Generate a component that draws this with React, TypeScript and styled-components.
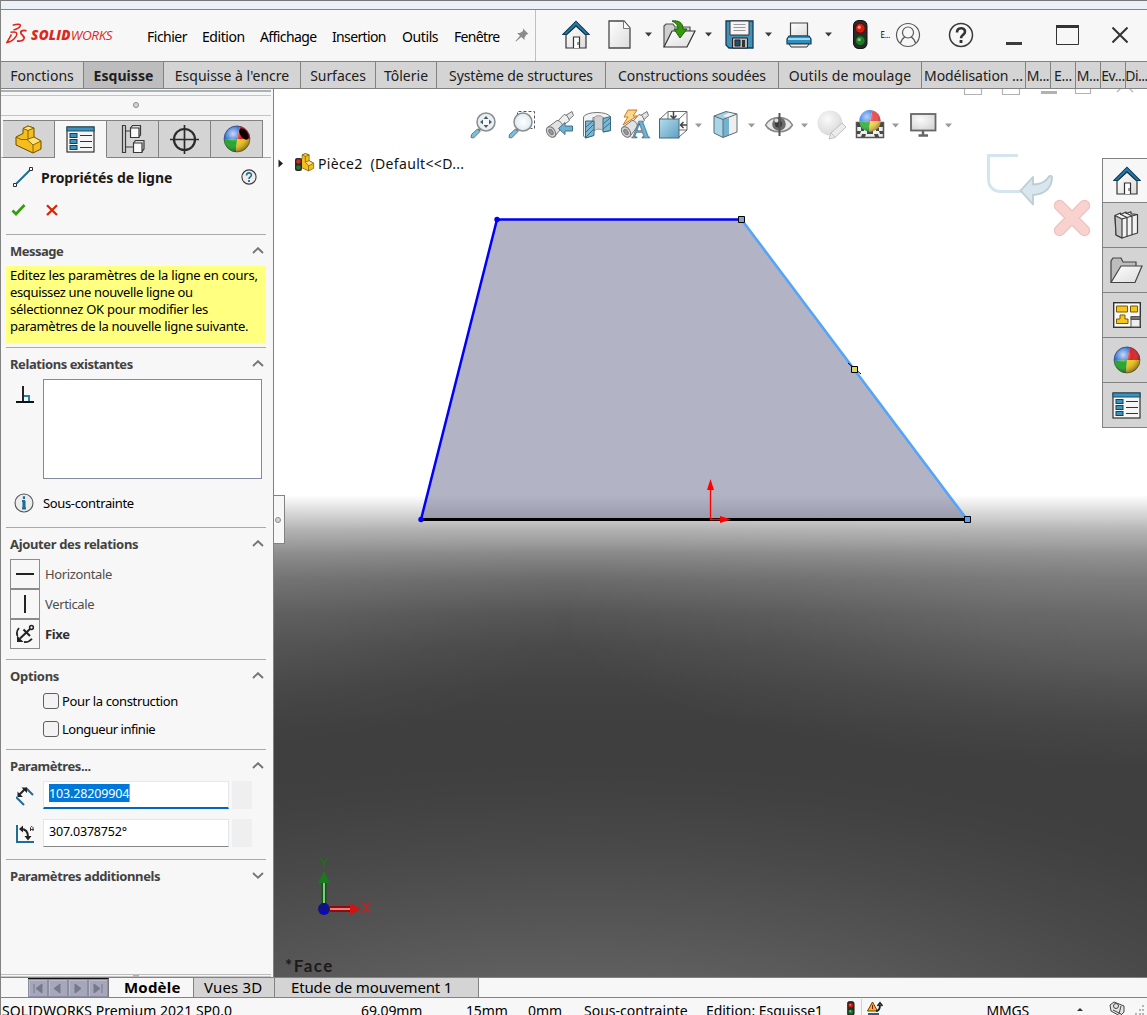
import React from "react";
import styled, { createGlobalStyle, css } from "styled-components";

const UI = '"Noto Sans", "Open Sans", sans-serif';
const LINE = "#828282";
const PANEL = "#f7f7f7";
const TAB = "#d4d4d4";

const Global = createGlobalStyle`
  *, *::before, *::after { box-sizing: border-box; }
  html, body { margin: 0; padding: 0; overflow: hidden; background: ${PANEL}; }
  svg { display: block; flex: none; }
`;

const Window = styled.div`
  width: 1147px;
  height: 1015px;
  display: flex;
  flex-direction: column;
  overflow: hidden;
  background: ${PANEL};
  border-left: 1px solid ${LINE};
  font-family: ${UI};
  font-size: 13px;
  color: #000;
  white-space: nowrap;
`;

const TitleStrip = styled.div`
  height: 10px;
  flex: none;
  background: #ecf1f9;
  border-top: 1px solid #77777b;
  border-bottom: 1px solid #84848a;
`;

/* ---------- menu bar ---------- */

const MenuBar = styled.header`
  height: 51px;
  flex: none;
  display: flex;
  align-items: center;
`;

const Brand = styled.div`
  width: 146px;
  padding-left: 5px;
  padding-bottom: 4px;
  display: flex;
  align-items: center;
`;

const BrandName = styled.span<{ $w: number; $ls: number; $ml?: number }>`
  font: italic ${(p) => p.$w} 13.5px/16px "Open Sans", sans-serif;
  letter-spacing: ${(p) => p.$ls}px;
  margin-left: ${(p) => p.$ml ?? 0}px;
  padding-top: 3px;
  color: #da291c;
`;

const MenuItem = styled.span<{ $w: number; $ls?: number }>`
  width: ${(p) => p.$w}px;
  flex: none;
  padding-top: 3px;
  font-size: 14px;
  line-height: 20px;
  letter-spacing: ${(p) => p.$ls ?? -0.3}px;
`;

const QuickBar = styled.div`
  height: 51px;
  flex: 1;
  display: flex;
  align-items: center;
  margin-left: 6px;
  padding-bottom: 2px;
  border-left: 1px solid #bfbfbf;
`;

const Slot = styled.span<{ $ml: number }>`
  margin-left: ${(p) => p.$ml}px;
  flex: none;
`;

const Tiny = styled.span`
  width: 9px;
  font-size: 8px;
  line-height: 12px;
  letter-spacing: -0.3px;
  margin-left: 13px;
  flex: none;
`;

/* ---------- command tabs ---------- */

const CommandTabs = styled.nav`
  height: 28px;
  flex: none;
  display: flex;
  border-top: 1px solid ${LINE};
  border-bottom: 1px solid ${LINE};
`;

const CommandTab = styled.div<{ $w: number; $active?: boolean; $ls: number }>`
  width: ${(p) => p.$w}px;
  flex: none;
  display: flex;
  justify-content: center;
  align-items: center;
  overflow: hidden;
  background: ${(p) => (p.$active ? "#bdbdbd" : TAB)};
  border-right: 1px solid ${LINE};
  color: #202020;
  font-size: 14px;
  letter-spacing: ${(p) => p.$ls}px;
  font-weight: ${(p) => (p.$active ? 700 : 400)};
`;

/* ---------- body ---------- */

const Body = styled.div`
  height: 888px;
  flex: none;
  display: flex;
`;

const Side = styled.aside`
  width: 273px;
  flex: none;
  display: flex;
  flex-direction: column;
  border-right: 1px solid ${LINE};
`;

const Grip = styled.div`
  height: 27px;
  width: 270px;
  flex: none;
  display: flex;
  flex-direction: column;
  align-items: center;
  border-bottom: 1px solid #c3c3c3;
  &::before {
    content: "";
    width: 270px;
    height: 6px;
    margin-top: 1px;
    margin-bottom: 6px;
    flex: none;
    border-top: 2px solid #a9b3b5;
    border-bottom: 1px solid #c4c4c4;
  }
`;

const Dot = styled.span`
  width: 6px;
  height: 6px;
  border-radius: 50%;
  background: #d4d4d4;
  border: 1px solid #8d8d8d;
`;

const ManagerTabs = styled.div`
  display: flex;
  height: 42px;
  width: 270px;
  flex: none;
  padding: 4px 0 0 2px;
  border-bottom: 1px solid #a8a8a8;
`;

const ManagerTab = styled.div<{ $active?: boolean }>`
  width: 52px;
  height: 38px;
  flex: none;
  display: flex;
  align-items: center;
  justify-content: center;
  border-top: 1px solid ${LINE};
  border-right: 1px solid ${LINE};
  border-bottom: 1px solid ${(p) => (p.$active ? PANEL : LINE)};
  background: ${(p) => (p.$active ? PANEL : TAB)};
`;

const TitleRow = styled.div`
  height: 41px;
  flex: none;
  display: flex;
  align-items: center;
  padding: 0 16px 3px 11px;
`;

const PanelTitle = styled.h1`
  flex: 1;
  margin: 0 0 0 7px;
  font-size: 14px;
  letter-spacing: -0.02px;
  font-weight: 700;
  color: #1a1a1a;
`;

const ActionRow = styled.div`
  height: 35px;
  flex: none;
  display: flex;
  gap: 20px;
  padding: 4px 0 0 10px;
`;

const Section = styled.section<{ $h: number }>`
  height: ${(p) => p.$h}px;
  width: 260px;
  margin-left: 5px;
  flex: none;
  border-top: 1px solid #a9a9a9;
`;

const SectionHead = styled.div`
  height: 31px;
  padding: 0 2px 0 4px;
  display: flex;
  align-items: center;
  justify-content: space-between;
`;

const SectionName = styled.h2<{ $ls?: number }>`
  margin: 0;
  font-size: 13px;
  font-weight: 700;
  letter-spacing: ${(p) => p.$ls ?? -0.35}px;
  color: #424242;
`;

const Message = styled.p`
  margin: 0;
  height: 77px;
  padding: 1px 0 0 4px;
  background: #ffff80;
  font-size: 13px;
  line-height: 17px;
`;

const MessageLine = styled.span<{ $ls: number }>`
  display: block;
  letter-spacing: ${(p) => p.$ls}px;
`;

const RelationRow = styled.div`
  display: flex;
  padding-left: 10px;
`;

const RelationList = styled.div`
  width: 219px;
  height: 100px;
  margin-left: 9px;
  background: #fff;
  border: 1px solid #828a9e;
`;

const StatusRow = styled.div`
  height: 48px;
  display: flex;
  align-items: center;
  gap: 9px;
  padding-left: 8px;
  letter-spacing: -0.35px;
`;

const RelationButtonRow = styled.div<{ $bold?: boolean }>`
  height: 30px;
  display: flex;
  align-items: center;
  gap: 5px;
  padding-left: 4px;
  letter-spacing: -0.36px;
  color: #4e4e4e;
  ${(p) => p.$bold && css`font-weight: 700; color: #303030;`}
`;

const RelationButton = styled.span`
  width: 30px;
  height: 30px;
  display: flex;
  align-items: center;
  justify-content: center;
  border: 1px solid #8c8c8c;
  color: #303030;
`;

const CheckRow = styled.label<{ $ls: number }>`
  height: 28px;
  display: flex;
  align-items: center;
  gap: 3px;
  padding: 0 0 8px 37px;
  letter-spacing: ${(p) => p.$ls}px;
`;

const CheckBox = styled.span`
  width: 16px;
  height: 16px;
  border: 1px solid #5f5f5f;
  border-radius: 3px;
  background: #f3f3f3;
`;

const ParamRow = styled.div`
  height: 38px;
  display: flex;
  padding-left: 10px;
`;

const Field = styled.div<{ $focus?: boolean }>`
  width: 186px;
  height: 28px;
  margin: 0 3px 0 9px;
  padding: 2px 0 0 5px;
  background: #fff;
  border: 1px solid #e3e7ee;
  border-bottom: ${(p) => (p.$focus ? "2px solid #0067c0" : "1px solid #868686")};
  line-height: 19px;
  font-size: 12.5px;
  letter-spacing: -0.2px;
`;

const Selected = styled.span`
  display: inline-block;
  height: 18px;
  line-height: 19px;
  background: #0078d7;
  color: #fff;
  border-right: 1px solid #f08a3c;
  letter-spacing: -0.14px;
`;

const Spin = styled.span`
  width: 20px;
  height: 28px;
  background: #efefef;
`;

const SideFoot = styled.div`
  margin-top: auto;
  height: 3px;
  width: 270px;
  border-top: 1px solid #bdbdbd;
  border-bottom: 1px solid #c8c8c8;
  display: flex;
  justify-content: center;
  &::after {
    content: "";
    width: 6px;
    height: 2px;
    background: #b5b5b5;
  }
`;

/* ---------- viewport ---------- */

const Viewport = styled.main`
  position: relative;
  flex: 1;
  overflow: hidden;
  background:
    radial-gradient(ellipse 900px 340px at 310px 1011px,
      rgba(255,255,255,.19) 30%, rgba(255,255,255,.17) 36.5%, rgba(255,255,255,.109) 55%,
      rgba(255,255,255,.052) 74.4%, rgba(255,255,255,.01) 91%, transparent 100%),
    radial-gradient(ellipse 620px 150px at 900px 530px,
      rgba(255,255,255,.13) 0%, rgba(255,255,255,.11) 30%, rgba(255,255,255,.045) 65%, transparent 100%),
    radial-gradient(ellipse 380px 130px at -80px 530px,
      rgba(255,255,255,.07) 0%, rgba(255,255,255,.055) 35%, rgba(255,255,255,.02) 70%, transparent 100%),
    linear-gradient(to bottom,
      #fff 406px, #f0f0f0 413px, #e2e2e2 419px, #c8c8c8 431px, #b1b1b1 441px, #9c9c9c 454px, #8a8a8a 464px,
      #797979 478px, #6b6b6b 491px, #555 524px, #494949 558px, #424242 598px, #3f3f3f 638px);
`;

const Scene = styled.svg`
  position: absolute;
  inset: 0;
`;

const HeadsUp = styled.div`
  position: relative;
  display: flex;
  align-items: center;
  height: 36px;
  margin-top: 18px;
`;

const TreeFlyout = styled.div`
  position: relative;
  display: flex;
  align-items: center;
  height: 24px;
  padding-left: 4px;
  margin-top: 8px;
  gap: 3px;
  font-size: 14px;
  letter-spacing: 0.33px;
  white-space: pre;
  color: #111;
`;

const TaskPane = styled.div`
  position: absolute;
  right: 0;
  top: 69px;
  width: 45px;
  display: flex;
  flex-direction: column;
  border-left: 1px solid ${LINE};
  border-top: 1px solid ${LINE};
`;

const TaskTab = styled.div<{ $active?: boolean }>`
  height: ${(p) => (p.$active ? 44 : 45)}px;
  padding-left: 3px;
  display: flex;
  align-items: center;
  justify-content: center;
  background: ${(p) => (p.$active ? PANEL : TAB)};
  border-bottom: 1px solid ${LINE};
`;

const PaneHandle = styled.div`
  position: absolute;
  left: -1px;
  top: 406px;
  width: 12px;
  height: 49px;
  padding-right: 2px;
  display: flex;
  align-items: center;
  justify-content: center;
  background: ${PANEL};
  border: 1px solid ${LINE};
  border-left: none;
`;

const ViewName = styled.div`
  position: absolute;
  left: 11px;
  bottom: 1px;
  font: 700 17px/20px Lato, sans-serif;
  letter-spacing: 1.5px;
  color: #1b1b1b;
`;

const Corner = styled.svg`
  position: absolute;
  left: 711px;
  top: 61px;
`;

/* ---------- bottom bars ---------- */

const DocTabs = styled.nav`
  height: 21px;
  flex: none;
  display: flex;
  border-top: 1px solid ${LINE};
  border-bottom: 1px solid ${LINE};
`;

const NavButtons = styled.div`
  margin-left: 27px;
  width: 81px;
  display: flex;
  border-top: 1px solid #111;
  border-right: 1px solid #777;
`;

const NavButton = styled.span`
  width: 20px;
  height: 18px;
  background: #a7a7bb;
  border: 1px solid #8c8ca2;
  box-shadow: inset 1px 1px 0 #b9b9cb;
`;

const DocTab = styled.div<{ $w: number; $active?: boolean; $ls: number; $left: number }>`
  width: ${(p) => p.$w}px;
  padding-left: ${(p) => p.$left}px;
  font-size: 15px;
  line-height: 19px;
  letter-spacing: ${(p) => p.$ls}px;
  font-weight: ${(p) => (p.$active ? 700 : 400)};
  background: ${(p) => (p.$active ? PANEL : TAB)};
  border-right: 1px solid ${LINE};
`;

const StatusBar = styled.footer`
  height: 25px;
  flex: none;
  display: flex;
  padding: 3px 0 0 1px;
  font-size: 14px;
  line-height: 20px;
`;

const StatusText = styled.span<{ $w: number; $ls?: number }>`
  width: ${(p) => p.$w}px;
  flex: none;
  letter-spacing: ${(p) => p.$ls ?? 0.02}px;
`;

const StatusRule = styled.span`
  width: 1px;
  height: 18px;
  margin: -2px 5px 0 6px;
  background: #d0d0d0;
`;

/* ---------- icons ---------- */

const Defs = () => (
  <svg width="0" height="0" style={{ position: "absolute" }}>
    <defs>
      <linearGradient id="paper" x1="0" y1="0" x2="1" y2="1">
        <stop offset="0" stopColor="#fff" /><stop offset="1" stopColor="#dcdcdc" />
      </linearGradient>
      <linearGradient id="ice" x1="0" y1="0" x2="1" y2="1">
        <stop offset="0" stopColor="#b4dcec" /><stop offset="1" stopColor="#5f9fc0" />
      </linearGradient>
      <radialGradient id="gloss" cx=".35" cy=".3" r=".75">
        <stop offset="0" stopColor="#fff" stopOpacity=".75" />
        <stop offset=".45" stopColor="#fff" stopOpacity=".05" />
        <stop offset="1" stopColor="#000" stopOpacity=".45" />
      </radialGradient>
      <radialGradient id="lens">
        <stop offset="0" stopColor="#fff" /><stop offset="1" stopColor="#dcebf2" />
      </radialGradient>
      <radialGradient id="ghost" cx=".4" cy=".35" r=".7">
        <stop offset="0" stopColor="#fafafa" /><stop offset="1" stopColor="#d6d6d6" />
      </radialGradient>
    </defs>
  </svg>
);

const Arrow = ({ color = "#3c3c3c" }: { color?: string }) => (
  <svg width="9" height="5" viewBox="0 0 9 5"><path d="M1 .5h7L4.500 4.500z" fill={color} /></svg>
);

const House = () => (
  <svg width="28" height="29" viewBox="0 0 28 29">
    <path d="M4 15V28h20V15L14 6z" fill="url(#paper)" stroke="#333" strokeWidth="1.200" />
    <path d="M11.500 28v-11h6v11" fill="#fff" stroke="#333" strokeWidth="1.200" />
    <path d="M16 22v3" stroke="#333" />
    <path d="M.8 14.500 14 1.200 27.200 14.500h-3.800L14 5.500 4.600 14.500z" fill="#2a7ca6" stroke="#0e3f5a" strokeWidth="1.100" />
  </svg>
);

const NewDoc = () => (
  <svg width="23" height="29" viewBox="0 0 23 29">
    <path d="M1 1h15l6 7v20H1z" fill="url(#paper)" stroke="#4a4a4a" strokeWidth="1.300" />
    <path d="M15.500 1v7.500H22" fill="#fff" stroke="#777" />
  </svg>
);

const OpenDoc = () => (
  <svg width="33" height="29" viewBox="0 0 33 29">
    <path d="M1 27V6l2-2h7l2 3h15v5" fill="#cfcfcf" stroke="#555" strokeWidth="1.200" />
    <path d="M1 27 9 11h23L24 27z" fill="url(#paper)" stroke="#333" strokeWidth="1.200" />
    <path d="M9 1c7-1 11 2 11 8h4l-7 9-6-9h4c0-4-2-6-6-8z" fill="#36990c" stroke="#1a5c04" />
  </svg>
);

const Save = () => (
  <svg width="29" height="29" viewBox="0 0 29 29">
    <path d="M1 1h27v27H4l-3-3z" fill="#4590b6" stroke="#143a50" strokeWidth="1.300" />
    <path d="M5 1h19v14H5z" fill="#f4f4f4" stroke="#333" />
    <path d="M8.500 4.500h12M8.500 7.500h12M8.500 10.500h12" stroke="#999" />
    <path d="M7.500 18h15v10h-15z" fill="#bcbcbc" stroke="#222" />
    <path d="M10 20h5v6h-5z" fill="#1c506c" stroke="#222" />
    <path d="M17 20h3v7h-3z" fill="#333" />
  </svg>
);

const Printer = () => (
  <svg width="26" height="26" viewBox="0 0 26 26">
    <path d="M4.500 14V1h17v13z" fill="url(#paper)" stroke="#444" strokeWidth="1.200" />
    <path d="M3 14h20l2 3v5H1v-5z" fill="#2f8fbd" stroke="#10425e" strokeWidth="1.200" />
    <path d="M2 17h22" stroke="#9bd8f4" strokeWidth="2" />
    <path d="M3 22h20l-2 3H5z" fill="#eee" stroke="#333" />
  </svg>
);

const Traffic = ({ h = 29 }: { h?: number }) => (
  <svg width={h / 2} height={h} viewBox="0 0 14 28">
    <rect x=".5" y=".5" width="13" height="27" rx="5" fill="#2b2b2b" stroke="#111" />
    <circle cx="7" cy="8" r="4.800" fill="#cf1d12" stroke="#5c0a06" />
    <circle cx="6" cy="7" r="1.600" fill="#ff8a7a" />
    <circle cx="7" cy="20" r="4.800" fill="#1f7a2a" stroke="#0b3d12" />
    <circle cx="6" cy="19" r="1.600" fill="#78c57e" />
  </svg>
);

const User = () => (
  <svg width="26" height="26" viewBox="0 0 26 26" fill="none" stroke="#5a5a5a" strokeWidth="1.200">
    <circle cx="13" cy="13" r="11.500" /><circle cx="13" cy="10.500" r="5.500" />
    <path d="M5.500 21.500c.5-3 2-5 4.300-6.500M20.500 21.500c-.5-3-2-5-4.300-6.500" />
  </svg>
);

const Question = ({ s, small }: { s: number; small?: boolean }) => (
  <svg width={s} height={s} viewBox="0 0 26 26" fill="none">
    <circle cx="13" cy="13" r="11.500" stroke="#3a3a3a" strokeWidth={small ? 1.800 : 1.500} fill={small ? "#eee" : "none"} />
    <path d="M9 10.500c0-5.500 8-5.500 8-.8 0 3-4 3-4 6.500" stroke={small ? "#1f6d95" : "#333"} strokeWidth="2.600" />
    <path d="M13 18v3" stroke={small ? "#1f6d95" : "#333"} strokeWidth="2.900" />
  </svg>
);

const Logo = () => (
  <svg width="23" height="22" viewBox="0 0 23 22" fill="none" stroke="#da291c" strokeWidth="1.500">
    <path d="M6.700 2.300C11 1 15.500 .8 14.200 3 13 5 9.500 6.500 7.500 7" />
    <path d="M4.500 9.300C9.500 8.300 12 9.500 10.300 12.800 8.500 16 4.500 18.800 .8 19.500L5.500 11.500" />
    <path d="M20.500 7.800C16.500 6.800 14 8.200 15 10.500 15.800 12.300 18.800 13 18 15.500 17.200 17.700 14 18.300 11 18" strokeWidth="1.800" />
  </svg>
);

const Pin = () => (
  <svg width="14" height="15" viewBox="0 0 14 15">
    <path d="M8 .5 13.500 6 11.500 6.500 9.500 9.500 9.500 12 6.300 9 1 13.500.5 13 5 7.800 2 5h3l3-2z" fill="#8b8b8b" />
  </svg>
);

const PartIcon = () => (
  <svg width="27" height="29" viewBox="0 0 27 29" stroke="#6b4a00" strokeLinejoin="round">
    <path d="M1 12 8 8.500V3.500L13 1l6 2v9l7 4v8l-8 4L1 20z" fill="#f3be1e" />
    <path d="M8 3.500 13 5.500 19 3 13 1zM12 14.500l7-2.500 7 4-8 4z" fill="#ffe27a" stroke="#8a6500" />
    <path d="M13 5.500v9M1 12l5 2.500 6 0M18 20v8" fill="none" stroke="#8a6500" />
  </svg>
);

const PropsIcon = () => (
  <svg width="29" height="27" viewBox="0 0 29 27">
    <rect x="1" y="1" width="27" height="25" fill="#f6f6f6" stroke="#333" strokeWidth="1.200" />
    <rect x="1" y="1" width="27" height="4" fill="#3a92bd" stroke="#1a4c68" />
    {[8, 14, 20].map((y) => (
      <g key={y}>
        <rect x="4" y={y - .5} width="7" height="4" fill="#3b93bd" stroke="#173f55" />
        <path d={`M14 ${y + 1.500}h12`} stroke="#333" />
      </g>
    ))}
  </svg>
);

const ConfigIcon = () => (
  <svg width="24" height="30" viewBox="0 0 24 30" stroke="#3a3a3a" strokeWidth="1.200" fill="none">
    <path d="M4.500 1.500h-3v27h3v-27M4 7h6M4 23h8" />
    <path d="M9.500 4l2-2.500h8V11l-2.500 2.500M12.500 19l2-2.500h8.500V25l-2.500 3" fill="#d8d8d8" />
    <path d="M9.500 4H18v9.500H9.500zM12.500 19H21v9.500h-8.500z" fill="#fafafa" />
  </svg>
);

const Target = () => (
  <svg width="29" height="29" viewBox="0 0 29 29" fill="none" stroke="#2b2b2b" strokeWidth="2.200">
    <circle cx="14.500" cy="14.500" r="10.500" /><path d="M14.500 0v29M0 14.500h29" strokeWidth="1.700" />
  </svg>
);

const Ball = ({ s = 28, hole }: { s?: number; hole?: boolean }) => (
  <svg width={s} height={s} viewBox="0 0 28 28">
    <path d="M14 14 17 1A13 13 0 0 0 1 15z" fill="#2a68d0" />
    <path d="M14 14 17 1a13 13 0 0 1 10 13z" fill="#d8181c" />
    <path d="M14 14 1 15a13 13 0 0 0 12 12z" fill="#14a21c" />
    <path d="M14 14 13 27A13 13 0 0 0 27 14z" fill="#f2c40e" />
    <circle cx="14" cy="14" r="13" fill="url(#gloss)" stroke="#333" strokeOpacity=".5" />
    {hole && <ellipse cx="21" cy="9" rx="3.700" ry="6.500" transform="rotate(-35 21 9)" fill="#0c0000" />}
  </svg>
);

const LineIcon = () => (
  <svg width="22" height="22" viewBox="0 0 22 22" fill="#fff" stroke="#333">
    <path d="M4 18 18 4" stroke="#1f6d95" strokeWidth="1.900" />
    <path d="M1.500 17.500h3v3h-3zM17.500 1.500h3v3h-3z" />
  </svg>
);

const Check = () => (
  <svg width="15" height="14" viewBox="0 0 15 14"><path d="M1.500 7.500 5 11 13.500 2" fill="none" stroke="#31a008" strokeWidth="2.700" /></svg>
);
const Cross = () => (
  <svg width="12" height="14" viewBox="0 0 12 14"><path d="M1 2.200 11 12M11 2.200 1 12" stroke="#dc2404" strokeWidth="2.300" /></svg>
);
const Chevron = ({ down }: { down?: boolean }) => (
  <svg width="12" height="8" viewBox="0 0 12 8">
    <path d={down ? "M1 1 6 5.800 11 1" : "M1 6 6 1.200 11 6"} fill="none" stroke="#767676" strokeWidth="1.900" />
  </svg>
);
const Perp = () => (
  <svg width="18" height="24" viewBox="0 0 18 24" fill="none">
    <path d="M7 7v16" stroke="#222" strokeWidth="2" /><path d="M0 23h18" stroke="#111" strokeWidth="2" />
    <path d="M8 17h5v5" stroke="#2a7da8" strokeWidth="2" />
  </svg>
);
const Info = () => (
  <svg width="20" height="20" viewBox="0 0 20 20">
    <circle cx="10" cy="10" r="9" fill="#ececec" stroke="#555" strokeWidth="1.100" />
    <path d="M10 3.300v2.800M8 8h2v7M8 15.300h4" stroke="#1f6d95" strokeWidth="2.200" fill="none" />
    <path d="M10 8v8" stroke="#1f6d95" strokeWidth="3" />
  </svg>
);
const Anchor = () => (
  <svg width="20" height="20" viewBox="0 0 20 20" fill="none" stroke="#222" strokeWidth="2">
    <path d="M5 14.500 15 5M8.500 5.500l6.500 6.500" /><circle cx="16.500" cy="3.500" r="1.900" strokeWidth="1.500" />
    <path d="M4 4C1.800 6.500 1.500 9.500 2.500 12M9 18c3.500.3 6-.8 8-3.300" strokeWidth="1.800" /><path d="M2 11.500V18h6.500z" fill="#222" stroke="none" />
  </svg>
);
const LengthIcon = () => (
  <svg width="18" height="28" viewBox="0 0 18 28" fill="none">
    <path d="M0 16l8 8M10 7l7 7" stroke="#1f6d95" strokeWidth="2" />
    <path d="M3 14 9 8" stroke="#222" strokeWidth="2" />
    <path d="M1.500 16v-5.500l5.500 5.500zM11 6.500V12L5.500 6.500z" fill="#222" />
  </svg>
);
const AngleIcon = () => (
  <svg width="18" height="28" viewBox="0 0 18 28" fill="none">
    <path d="M1 6v17h17" stroke="#1f6d95" strokeWidth="2" />
    <path d="M5 10c5 0 7 3 7 8" stroke="#222" strokeWidth="2" />
    <path d="M3 10l4-3.500v7zM12 21.500l-3.500-4.500h7z" fill="#222" />
    <path d="M14.500 12V8.500l1-1h.5l1 1V12M14.500 10.500h3" stroke="#333" />
  </svg>
);

/* heads-up toolbar icons, all on a 30 px grid */
const Hud = ({ children }: { children: React.ReactNode }) => (
  <svg width="30" height="32" viewBox="0 0 30 32" fill="none" overflow="visible">{children}</svg>
);
const Lens = ({ cx }: { cx: number }) => (
  <>
    <path d="M2.500 25.500 8.500 20l2.500 2.500-6.500 6.500-2.500-.5z" fill="#7fbddb" stroke="#4a7d98" />
    <path d="M9.500 21.500 12 19" stroke="#777" strokeWidth="2.500" />
    <circle cx={cx} cy="13" r="9" fill="url(#lens)" stroke="#8c8c8c" strokeWidth="1.500" />
  </>
);
const ZoomFit = () => (
  <Hud>
    <Lens cx={17} />
    <path d="M17 7l2.500 3h-5zM17 19l2.500-3h-5zM11 13l3-2.500v5zM23 13l-3-2.500v5z" fill="#4f5a60" />
  </Hud>
);
const ZoomArea = () => (
  <Hud>
    <path d="M10.500 6.500V2.500h17v17h-4" stroke="#555" strokeDasharray="3 2" />
    <Lens cx={16} />
  </Hud>
);
const Scope = () => (
  <g stroke="#777" strokeLinejoin="round">
    <path d="M20.500 6.500 27 2.500l1.500 4-5.500 5z" fill="#e3e3e3" />
    <path d="M13 12l6-6.500 3 1 2.500 5-8 6z" fill="#f0f0f0" />
    <path d="M2.500 18.500 12 11.500c3 0 5.500 3 5.500 6L9.500 28z" fill="#e2e2e2" />
    <ellipse cx="6" cy="23" rx="4" ry="5.800" transform="rotate(-35 6 23)" fill="#d4d4d4" />
    <ellipse cx="6" cy="23" rx="1.700" ry="3" transform="rotate(-35 6 23)" fill="#999" />
  </g>
);
const PrevView = () => (
  <Hud><Scope /><path d="M13.500 19.500 20 13.500v3.500h7.500v5H20v3.500z" fill="#6fb1d0" stroke="#42728a" /></Hud>
);
const SectionView = () => (
  <Hud>
    <path d="M1.500 8C4 2 26 2 28.500 8v13.500l-7 1.500V8.500H11v18l-7.500 2.500-2-2z" fill="#f2f2f2" stroke="#777" />
    <path d="M12 9c1-3 8-3 9.500 0v13c-3-2.500-6-2.500-9.500 0z" fill="#d0d0d0" stroke="#999" />
    <path d="M3.500 12h8.500v14.500l-8.500 2.500zM21 9.500l7.500-2V21.500l-7.500 1.500z" fill="#7ab8d6" stroke="#376984" />
    <path d="M4 18l7-6M4 23l8-8M4 28l8-8M21 15l7-6M21 20l7-6" stroke="#376d8a" />
  </Hud>
);
const AnnotView = () => (
  <Hud>
    <Scope /><path d="M8 1h9l-4 6h4L3 16l5-8H4z" fill="#fbd98a" stroke="#d07722" />
    <text x="11.500" y="29" fontFamily="Liberation Serif, serif" fontWeight="700" fontSize="25" fill="#74b0cd" stroke="#376984" strokeWidth=".7">A</text>
  </Hud>
);
const Orient = () => (
  <Hud>
    <path d="M2 10 10 2.500h19V21L21 28M21 10l8-7.500M10 3v7M21 21h8" stroke="#6a6a6a" />
    <rect x="1.500" y="10" width="19.500" height="19" fill="url(#ice)" stroke="#3f6b80" />
    <path d="M15.500 2v7M12.500 6.500l3 3 3-3M29 16h-6M25.500 13l-3 3 3 3" stroke="#444" strokeWidth="1.500" />
  </Hud>
);
const Display = () => (
  <Hud>
    <path d="M3 7 15 2.500 26 5 26 23 12 28.500 3 24z" fill="#eee" />
    <path d="M3 7l9 3.500V28.500L3 24z" fill="#a8d5e7" /><path d="M12 10.500 18 9v17.500l-6 2z" fill="#74b2d1" />
    <path d="M3 7 15 2.500l3 1-6 3.500 6 2-6 1.500z" fill="#9dd0e5" />
    <path d="M3 7l9 3.500L26 5M12 10.500v18M3 7 15 2.500 26 5V23L12 28.500 3 24z" stroke="#5b6c74" />
  </Hud>
);
const EyeIcon = () => (
  <Hud>
    <path d="M1.500 16C7 6 23 6 28.500 16 23 25 7 25 1.500 16z" fill="#e9e9e9" stroke="#888" strokeWidth="1.500" />
    <circle cx="15" cy="15" r="6.800" fill="#6c6c6c" /><circle cx="14.500" cy="15" r="3.500" fill="#3a3a3a" />
    <circle cx="12.500" cy="11.500" r="2" fill="#ddd" /><path d="M15.500 4v23" stroke="#555" strokeWidth="2" />
  </Hud>
);
const GhostBall = () => (
  <Hud>
    <circle cx="13" cy="14" r="12.500" fill="url(#ghost)" />
    <path d="M12 30l2-6L25 14l4 4L18 28.500z" fill="#ececec" stroke="#c0c0c0" /><path d="M14 24l4 4" stroke="#c0c0c0" />
  </Hud>
);
const SceneBall = () => (
  <Hud>
    <path d="M1.500 13.500h27v15h-27z" fill="#eee" stroke="#555" strokeWidth="1.500" />
    <path d="M2 14h4v4H2zM24 14h4v4h-4zM6 18h3v4H6zM21 18h3v4h-3zM2 22h4l-1 3H2zM24 22h4v3h-3zM7 25h4l-1 3H6zM12 22h6v3h-6zM19 25h4l1 3h-4z" fill="#484848" />
    <g transform="translate(3.500 .5) scale(.82)">
      <path d="M14 14 17 1A13 13 0 0 0 1 15z" fill="#4c8cee" /><path d="M14 14 17 1a13 13 0 0 1 10 13z" fill="#e8484c" />
      <path d="M14 14 1 15a13 13 0 0 0 12 12z" fill="#35b53d" /><path d="M14 14 13 27A13 13 0 0 0 27 14z" fill="#f8d552" />
      <circle cx="14" cy="14" r="13" fill="url(#gloss)" opacity=".8" />
    </g>
  </Hud>
);
const Monitor = () => (
  <Hud>
    <rect x="3" y="5" width="24.500" height="16.500" fill="url(#ghost)" stroke="#666" strokeWidth="1.800" />
    <path d="M15 22v4M10.500 26.500h9.500" stroke="#666" strokeWidth="2.500" />
  </Hud>
);

/* task pane icons */
const Library = () => (
  <svg width="25" height="28" viewBox="0 0 25 28" stroke="#3c3c3c" strokeWidth="1.200" strokeLinejoin="round">
    <path d="M1 4.500 6.500 2v1.500L12 1v1.500L17 .8v2L23.500 3.500V22L8 27 2 24z" fill="#f2f2f2" />
    <path d="M1 4.500 8 8v19l-6-3z" fill="#c4c4c4" />
    <path d="M8 8l5-1.500L7 3.500M13 6.500 18 5l-6-3M18 5l5.500-1.500M13 7v18.500M18 5.500V24" fill="none" />
  </svg>
);
const Folder = () => (
  <svg width="33" height="27" viewBox="0 0 33 27" stroke="#444" strokeWidth="1.200">
    <path d="M1 25V4l2-3h8l2 4h13v4" fill="#bdbdbd" /><path d="M1 25.500 11 9h21l-7 16.500z" fill="url(#paper)" />
  </svg>
);
const Palette = () => (
  <svg width="28" height="26" viewBox="0 0 28 26" stroke="#765b00">
    <rect x=".7" y=".7" width="26.600" height="24.600" fill="#fafafa" stroke="#333" strokeWidth="1.400" />
    <path d="M3.500 4h11v6h-11zM17.500 4h7v6h-7zM7 13h5v4h3v4.500H3.500V17H7z" fill="#f7c61b" />
    <path d="M18 14.500h9V25h-9z" fill="#eee" stroke="#555" /><path d="M18 14.500h9v3h-9z" fill="#777" stroke="#555" />
  </svg>
);

const ConfirmCorner = () => (
  <Corner width="110" height="92" viewBox="985 150 110 92" fill="none">
    <path d="M1018 155.500h-29.500v24c0 7 5 12 12 12h22" stroke="#d4e5ed" strokeWidth="3" />
    <path d="M1020.500 190.500 1033 177v7.500c8 0 13-3 16-8 1-1 3-1 3 1 0 9-6 17-19 17.500v9.500z" fill="#d9e6ee" stroke="#bccdd7" strokeWidth="1.800" strokeLinejoin="round" />
    <path d="M1059.500 205.500l25 25M1084.500 205.500l-25 25" stroke="#efc0bc" strokeWidth="11.500" strokeLinecap="round" />
    <path d="M1059.500 205.500l25 25M1084.500 205.500l-25 25" stroke="#f8d2cf" strokeWidth="9" strokeLinecap="round" />
  </Corner>
);

const Sketch = () => (
  <Scene width="873" height="888" viewBox="274 89 873 888" fill="none">
    <g stroke="#b2b2b2" strokeWidth="1.200">
      <path d="M964.500 89v5.500h17V89M1002.500 89v5.500h17V89M1075.500 89v4.500h15V89M1117 92l4-4M1133 92l-4-4" />
      <path d="M1041 92.500h16" strokeWidth="3" />
    </g>
    <path d="M497 219.500H741.500L967 519.500H421z" fill="rgba(111,111,147,.53)" />
    <path d="M421 519.500H967" stroke="#000" strokeWidth="3" />
    <path d="M421 519.500 497 219.500H741" stroke="#0000f5" strokeWidth="2.500" />
    <path d="M741.500 219.500 967 519.500" stroke="#54a5fa" strokeWidth="2.600" />
    <circle cx="497" cy="219.500" r="2.700" fill="#0000f5" /><circle cx="421" cy="519.500" r="2.700" fill="#0000f5" />
    <g fill="#54a5fa" stroke="#000">
      <path d="M738.500 216.500h6v6h-6z" fill="#7ba6c9" /><path d="M964.500 516.500h6v6h-6z" />
      <path d="M848 363l13 11" /><path d="M851.500 366.500h6v6h-6z" fill="#d5d95c" />
    </g>
    <path d="M710.500 519.500V486M710 519.500h12" stroke="#f00" strokeWidth="1.300" />
    <path d="M710.500 479l3.500 11h-7zM731 519.500l-11-3.500v7z" fill="#f00" />

    <path d="M324 903V882" stroke="#0f5a12" strokeWidth="5" /><path d="M324 903V882" stroke="#83c785" strokeWidth="2" />
    <path d="M324 871l6 12h-12z" fill="#1c7a1e" />
    <path d="M330 909h20" stroke="#8c0d0d" strokeWidth="6" /><path d="M330 909h20" stroke="#ee7d7d" strokeWidth="2" />
    <path d="M361 909l-11-6v12z" fill="#d01414" />
    <circle cx="324" cy="909" r="6" fill="#141478" />
    <path d="M321.500 903.500h5l-5 9h5" stroke="#0000ff" />
    <path d="M320.500 858l3.500 5 3.500-5M324 863v5" stroke="#0c800c" strokeWidth="1.200" />
    <path d="M362.500 902l7.500 11M370 902l-7.500 11" stroke="#f01010" strokeWidth="1.200" />
  </Scene>
);

const NAV = ["M6 4v9M14 4v9l-6-4.500z", "M12 4v9L6 8.500z", "M7 4v9l6-4.500z", "M14 4v9M6 4v9l6-4.500z"];

const MENU: [string, number, number][] = [
  ["Fichier", 55, -0.5], ["Edition", 58, -0.45], ["Affichage", 72, -0.6],
  ["Insertion", 70, -0.65], ["Outils", 52, -0.4], ["Fenêtre", 61, -0.65],
];

const TABS: [string, number, number][] = [
  ["Fonctions", 83, 0], ["Esquisse", 80, 0.05], ["Esquisse à l'encre", 137, 0], ["Surfaces", 75, -0.05],
  ["Tôlerie", 61, 0], ["Système de structures", 169, -0.1], ["Constructions soudées", 173, -0.1],
  ["Outils de moulage", 143, 0.12], ["Modélisation ...", 104, -0.08], ["M...", 25, -0.4], ["E...", 25, -0.3],
  ["M...", 25, -0.4], ["Ev...", 25, -0.4], ["Di...", 22, -0.5],
];

const SectionTop = ({ name, down, ls }: { name: string; down?: boolean; ls?: number }) => (
  <SectionHead><SectionName $ls={ls}>{name}</SectionName><Chevron down={down} /></SectionHead>
);

const HudArrow = () => <Arrow color="#9a9a9a" />;

export default function App() {
  return (
    <Window>
      <Global />
      <Defs />
      <TitleStrip />
      <MenuBar>
        <Brand>
          <Logo />
          <BrandName $w={800} $ls={0.25} $ml={2}>SOLID</BrandName>
          <BrandName $w={400} $ls={-0.35}>WORKS</BrandName>
        </Brand>
        {MENU.map(([t, w, ls]) => <MenuItem key={t} $w={w} $ls={ls}>{t}</MenuItem>)}
        <Slot $ml={0}><Pin /></Slot>
        <QuickBar>
          <Slot $ml={26}><House /></Slot>
          <Slot $ml={18}><NewDoc /></Slot>
          <Slot $ml={13}><Arrow /></Slot>
          <Slot $ml={10}><OpenDoc /></Slot>
          <Slot $ml={8}><Arrow /></Slot>
          <Slot $ml={12}><Save /></Slot>
          <Slot $ml={10}><Arrow /></Slot>
          <Slot $ml={13}><Printer /></Slot>
          <Slot $ml={12}><Arrow /></Slot>
          <Slot $ml={20}><Traffic /></Slot>
          <Tiny>E...</Tiny>
          <Slot $ml={5}><User /></Slot>
          <Slot $ml={27}><Question s={26} /></Slot>
          <Slot $ml={32}>
            <svg width="16" height="22" viewBox="0 0 16 22"><path d="M0 18h16v3H0z" fill="#3c3c3c" /></svg>
          </Slot>
          <Slot $ml={34}>
            <svg width="23" height="20" viewBox="0 0 23 20"><path d="M.5 1.500h22v18H.5z" fill="none" stroke="#333" /><path d="M0 0h23v3H0z" fill="#333" /></svg>
          </Slot>
          <Slot $ml={33}>
            <svg width="16" height="16" viewBox="0 0 16 16"><path d="M.5.500l15 15M15.500.500l-15 15" stroke="#333" strokeWidth="2" /></svg>
          </Slot>
        </QuickBar>
      </MenuBar>

      <CommandTabs>
        {TABS.map(([t, w, ls], i) => <CommandTab key={i} $w={w} $ls={ls} $active={i === 1}>{t}</CommandTab>)}
      </CommandTabs>

      <Body>
        <Side>
          <Grip><Dot /></Grip>
          <ManagerTabs>
            <ManagerTab><PartIcon /></ManagerTab>
            <ManagerTab $active><PropsIcon /></ManagerTab>
            <ManagerTab><ConfigIcon /></ManagerTab>
            <ManagerTab><Target /></ManagerTab>
            <ManagerTab><Ball hole /></ManagerTab>
          </ManagerTabs>
          <TitleRow>
            <LineIcon />
            <PanelTitle>Propriétés de ligne</PanelTitle>
            <Question s={16} small />
          </TitleRow>
          <ActionRow><Check /><Cross /></ActionRow>

          <Section $h={113}>
            <SectionTop name="Message" ls={-0.5} />
            <Message>
              <MessageLine $ls={-0.2}>Editez les paramètres de la ligne en cours,</MessageLine>
              <MessageLine $ls={-0.35}>esquissez une nouvelle ligne ou</MessageLine>
              <MessageLine $ls={-0.23}>sélectionnez OK pour modifier les</MessageLine>
              <MessageLine $ls={-0.3}>paramètres de la nouvelle ligne suivante.</MessageLine>
            </Message>
          </Section>
          <Section $h={180}>
            <SectionTop name="Relations existantes" ls={-0.42} />
            <RelationRow><Perp /><RelationList /></RelationRow>
            <StatusRow><Info />Sous-contrainte</StatusRow>
          </Section>
          <Section $h={132}>
            <SectionTop name="Ajouter des relations" />
            <RelationButtonRow>
              <RelationButton><svg width="18" height="2"><path d="M0 1h18" stroke="#222" strokeWidth="2" /></svg></RelationButton>Horizontale
            </RelationButtonRow>
            <RelationButtonRow>
              <RelationButton><svg width="2" height="18"><path d="M1 0v18" stroke="#222" strokeWidth="2" /></svg></RelationButton>Verticale
            </RelationButtonRow>
            <RelationButtonRow $bold><RelationButton><Anchor /></RelationButton>Fixe</RelationButtonRow>
          </Section>
          <Section $h={90}>
            <SectionTop name="Options" ls={-0.3} />
            <CheckRow $ls={-0.36}><CheckBox />Pour la construction</CheckRow>
            <CheckRow $ls={-0.48}><CheckBox />Longueur infinie</CheckRow>
          </Section>
          <Section $h={110}>
            <SectionTop name="Paramètres..." ls={-0.42} />
            <ParamRow><LengthIcon /><Field $focus><Selected>103.28209904</Selected></Field><Spin /></ParamRow>
            <ParamRow><AngleIcon /><Field>307.0378752°</Field><Spin /></ParamRow>
          </Section>
          <Section $h={60}>
            <SectionTop name="Paramètres additionnels" down ls={-0.4} />
          </Section>
          <SideFoot />
        </Side>

        <Viewport>
          <Sketch />
          <HeadsUp>
            <Slot $ml={195}><ZoomFit /></Slot>
            <Slot $ml={8}><ZoomArea /></Slot>
            <Slot $ml={8}><PrevView /></Slot>
            <Slot $ml={7}><SectionView /></Slot>
            <Slot $ml={8}><AnnotView /></Slot>
            <Slot $ml={8}><Orient /></Slot>
            <Slot $ml={6}><HudArrow /></Slot>
            <Slot $ml={8}><Display /></Slot>
            <Slot $ml={6}><HudArrow /></Slot>
            <Slot $ml={8}><EyeIcon /></Slot>
            <Slot $ml={6}><HudArrow /></Slot>
            <Slot $ml={8}><GhostBall /></Slot>
            <Slot $ml={8}><SceneBall /></Slot>
            <Slot $ml={6}><HudArrow /></Slot>
            <Slot $ml={8}><Monitor /></Slot>
            <Slot $ml={6}><HudArrow /></Slot>
          </HeadsUp>
          <TreeFlyout>
            <svg width="6" height="9" viewBox="0 0 6 9"><path d="M.5.500v8L5 4.500z" fill="#222" /></svg>
            <Slot $ml={6}>
              <svg width="22" height="20" viewBox="0 0 22 20">
                <g transform="translate(4 0) scale(.64)" stroke="#6b4a00" strokeLinejoin="round">
                  <path d="M1 12 8 9 8 3 13 1 19 3 19 12 26 16V24L18 28 1 20z" fill="#f3be1e" />
                  <path d="M8 3 13 5 19 3 13 1zM13 14l6-2 7 4-8 4z" fill="#ffe27a" /><path d="M18 20v8M13 14V5" />
                </g>
                <rect x="2" y="5" width="7" height="13" rx="2" fill="#2b2b2b" />
                <circle cx="5.500" cy="8.500" r="2.300" fill="#d02a20" /><circle cx="5.500" cy="14.500" r="2.300" fill="#1f7a2a" />
              </svg>
            </Slot>
            <span>Pièce2  (Default&lt;&lt;D...</span>
          </TreeFlyout>
          <ConfirmCorner />
          <TaskPane>
            <TaskTab $active><House /></TaskTab>
            <TaskTab><Library /></TaskTab>
            <TaskTab><Folder /></TaskTab>
            <TaskTab><Palette /></TaskTab>
            <TaskTab><Ball /></TaskTab>
            <TaskTab><PropsIcon /></TaskTab>
          </TaskPane>
          <PaneHandle><Dot /></PaneHandle>
          <ViewName>*Face</ViewName>
        </Viewport>
      </Body>

      <DocTabs>
        <NavButtons>
          {NAV.map((d) => (
            <NavButton key={d}><svg width="18" height="16" viewBox="1 0 18 16"><path d={d} fill="#77778d" stroke="#77778d" /></svg></NavButton>
          ))}
        </NavButtons>
        <DocTab $w={85} $left={15} $active $ls={0.2}>Modèle</DocTab>
        <DocTab $w={81} $left={10} $ls={0.15}>Vues 3D</DocTab>
        <DocTab $w={204} $left={16} $ls={-0.15}>Etude de mouvement 1</DocTab>
      </DocTabs>

      <StatusBar>
        <StatusText $w={359} $ls={0.04}>SOLIDWORKS Premium 2021 SP0.0</StatusText>
        <StatusText $w={105} $ls={-0.1}>69.09mm</StatusText>
        <StatusText $w={62} $ls={-0.15}>15mm</StatusText>
        <StatusText $w={56} $ls={-0.1}>0mm</StatusText>
        <StatusText $w={122}>Sous-contrainte</StatusText>
        <StatusText $w={141} $ls={-0.05}>Edition: Esquisse1</StatusText>
        <Slot $ml={0}><Traffic h={15} /></Slot>
        <StatusRule />
        <Slot $ml={0}>
          <svg width="16" height="18" viewBox="0 0 16 18">
            <path d="M5.500 1 10.500 10H.5z" fill="#f6b51c" stroke="#5f4300" /><path d="M5.500 4v4" stroke="#a00" />
            <path d="M9 10c3 0 4-2 4-6M10.500 5 13 2l2.500 3" fill="none" stroke="#222" strokeWidth="1.800" />
            <path d="M1 12h11v6H1z" fill="#27607f" />
          </svg>
        </Slot>
        <Slot $ml={104} />
        <StatusText $w={90} $ls={-0.2}>MMGS</StatusText>
        <svg width="6" height="14" viewBox="0 0 6 14"><path d="M0 10h6L3 7z" fill="#333" /></svg>
        <Slot $ml={25}>
          <svg width="18" height="17" viewBox="0 0 18 17" stroke="#444" fill="#e4e4e4">
            <path d="M2 4l4-3 10 4v6l-4 4-9-5z" /><circle cx="8" cy="5" r="2.500" /><path d="M5 9l8 4M13 5l-2 8" />
          </svg>
        </Slot>
        <Slot $ml={9}>
          <svg width="10" height="17" viewBox="0 0 10 17"><path d="M7 4h2v2H7zM4 8h2v2H4zM7 8h2v2H7zM0 12h2v2H0zM4 12h2v2H4zM7 12h2v2H7z" fill="#b5b5b5" /></svg>
        </Slot>
      </StatusBar>
    </Window>
  );
}
